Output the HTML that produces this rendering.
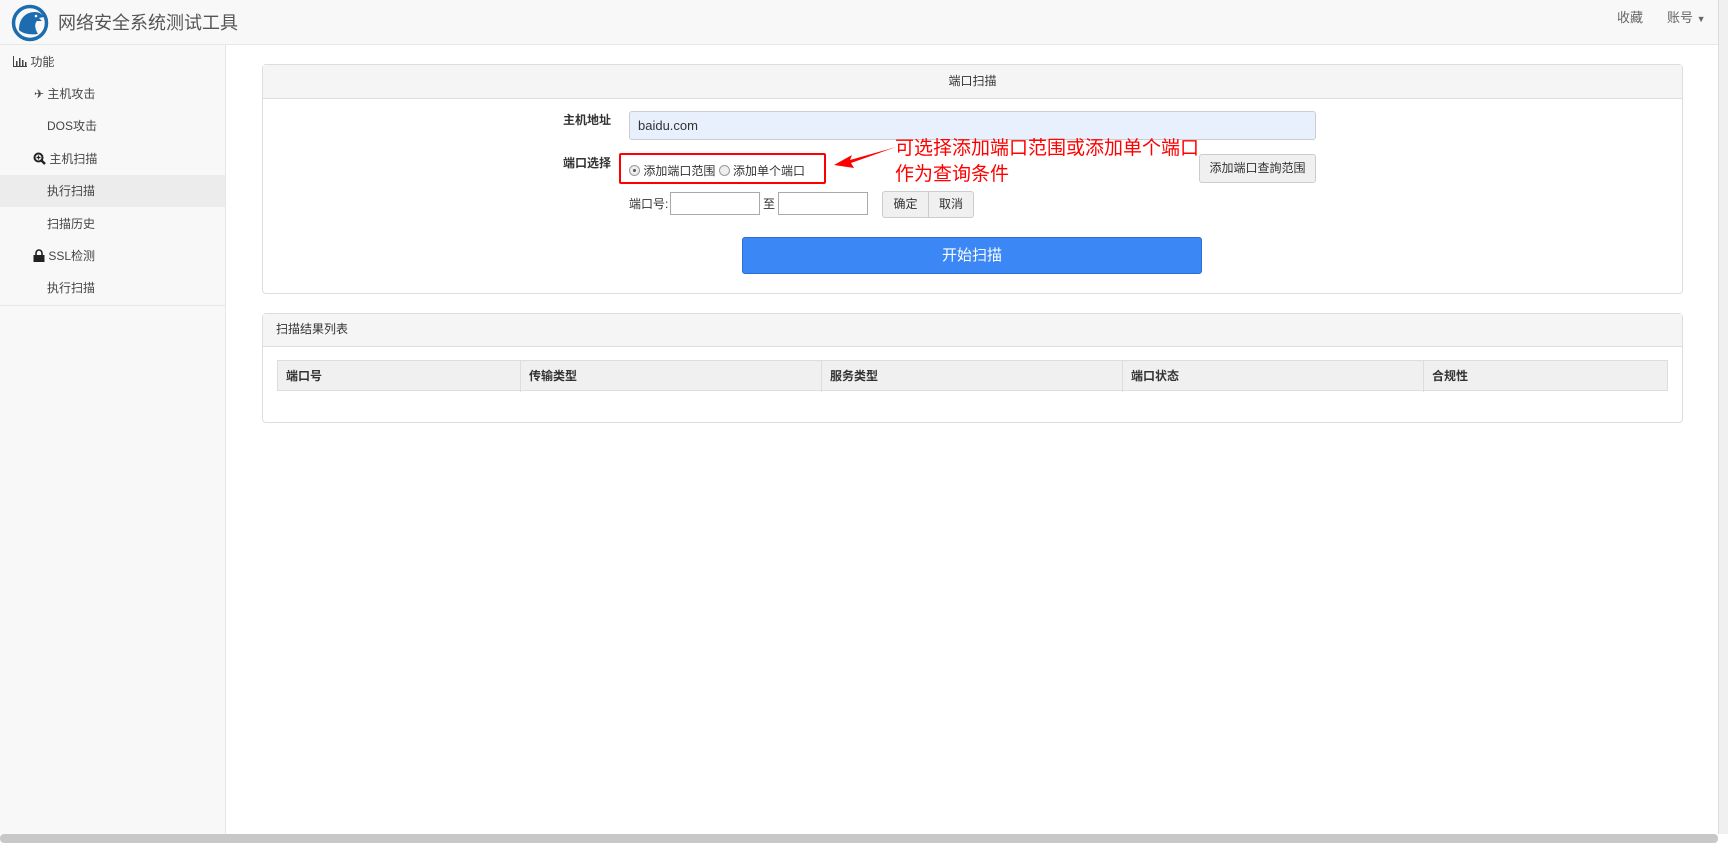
<!DOCTYPE html>
<html><head><meta charset="utf-8"><style>
*{box-sizing:border-box;margin:0;padding:0}
body{width:1728px;height:843px;overflow:hidden;background:#fff;font-family:"Liberation Sans","Noto Sans CJK SC",sans-serif;font-size:13px;color:#333;position:relative}
.abs{position:absolute}
.hdr{left:0;top:0;width:1718px;height:45px;background:#f8f8f8;border-bottom:1px solid #e7e7e7}
.side{left:0;top:45px;width:226px;height:789px;background:#f8f8f8;border-right:1px solid #e7e7e7}
.side .bot{position:absolute;left:0;top:260px;width:225px;border-top:1px solid #e7e7e7}
.it{position:absolute;left:0;width:225px;height:32px;line-height:32px;color:#444;font-size:12px}
.panel{border:1px solid #ddd;border-radius:4px;background:#fff}
.ph{background:#f5f5f5;border-bottom:1px solid #ddd}
.btn{border:1px solid #ccc;background:#f0f0f0;border-radius:3px;text-align:center;color:#333}
input{border:1px solid #aaa;height:23px}
.th{position:absolute;top:0;height:31px;line-height:31px;padding-left:8px;font-weight:bold;border-right:1px solid #ddd}
.rad{display:inline-block;width:11px;height:11px;border-radius:50%;border:1px solid #999;background:#eee;vertical-align:-1px;position:relative}
</style></head><body>
<div class="abs hdr">
 <svg class="abs" style="left:11px;top:4px" width="38" height="38" viewBox="0 0 38 38"><circle cx="19" cy="19" r="16.5" fill="none" stroke="#1e6cb0" stroke-width="3.5"/><path d="M8 26 C8 14 15 8 24 8 C28 8 31 10 33 13 L28 14 L31 17 L26 17 C24 19 23 23 27 30 C20 31 12 30 8 26Z" fill="#1e6cb0"/><circle cx="25" cy="12" r="1.3" fill="#fff"/></svg>
 <div class="abs" style="left:58px;top:9px;font-size:18px;color:#555">网络安全系统测试工具</div>
 <div class="abs" style="left:1617px;top:7px;color:#666">收藏</div>
 <div class="abs" style="left:1667px;top:7px;color:#666">账号 <span style="font-size:9px">▼</span></div>
</div>
<div class="abs side">
 <div class="it" style="top:1px;left:13px"><svg width="14" height="11" style="vertical-align:-1px"><path d="M0.5 0V10.5H14" stroke="#444" fill="none"/><rect x="3" y="5" width="1.5" height="5" fill="#444"/><rect x="6" y="2" width="1.5" height="8" fill="#444"/><rect x="9" y="4" width="1.5" height="6" fill="#444"/><rect x="12" y="6" width="1.5" height="4" fill="#444"/></svg> 功能</div>
 <div class="it" style="top:33px;padding-left:34px">✈ 主机攻击</div>
 <div class="it" style="top:65px;padding-left:47px">DOS攻击</div>
 <div class="it" style="top:98px;padding-left:33px"><svg width="13" height="13" style="vertical-align:-2px"><circle cx="5.5" cy="5.5" r="4" stroke="#222" stroke-width="2" fill="none"/><path d="M8.5 8.5L12 12" stroke="#222" stroke-width="2.5"/><path d="M5.5 3.5V7.5M3.5 5.5H7.5" stroke="#222" stroke-width="1.2"/></svg> 主机扫描</div>
 <div class="it" style="top:130px;padding-left:47px;background:#ececec">执行扫描</div>
 <div class="it" style="top:163px;padding-left:47px">扫描历史</div>
 <div class="it" style="top:195px;padding-left:33px"><svg width="12" height="13" style="vertical-align:-2px"><path d="M3 6V4a3 3 0 0 1 6 0v2" stroke="#222" stroke-width="1.6" fill="none"/><rect x="0.5" y="6" width="11" height="7" fill="#222"/></svg> SSL检测</div>
 <div class="it" style="top:227px;padding-left:47px">执行扫描</div>
 <div class="bot"></div>
</div>
<div class="abs" style="left:1718px;top:0;width:10px;height:834px;background:#f0f0f0;border-left:1px solid #ddd"></div>
<div class="abs" style="left:0;top:834px;width:1718px;height:9px;background:#c8c8c8;border-radius:4px"></div>

<div class="abs panel" style="left:262px;top:64px;width:1421px;height:230px">
 <div class="ph" style="height:34px;line-height:33px;text-align:center;font-size:12px">端口扫描</div>
</div>
<div class="abs" style="left:563px;top:111px;font-weight:bold;font-size:12px">主机地址</div>
<div class="abs" style="left:629px;top:111px;width:687px;height:29px;background:#e8f0fe;border:1px solid #ccc;border-radius:3px;padding-left:8px;line-height:27px">baidu.com</div>
<div class="abs" style="left:563px;top:154px;font-weight:bold;font-size:12px">端口选择</div>
<div class="abs" style="left:619px;top:153px;width:207px;height:31px;border:2px solid #f00;border-radius:2px"></div>
<div class="abs" style="left:629px;top:162px;font-size:12px"><span class="rad"><span style="position:absolute;left:3px;top:3px;width:3px;height:3px;border-radius:50%;background:#555"></span></span> 添加端口范围 <span class="rad"></span> 添加单个端口</div>
<svg class="abs" style="left:830px;top:143px" width="70" height="30"><path d="M4 22 L22 12 L20 17 L66 4 L21 20 L24 25Z" fill="#f00"/></svg>
<div class="abs" style="left:895px;top:136px;color:#f00;font-size:19px;line-height:26px">可选择添加端口范围或添加单个端口<br>作为查询条件</div>
<div class="abs btn" style="left:1199px;top:154px;width:117px;height:29px;line-height:27px;font-size:12px">添加端口查詢范围</div>
<div class="abs" style="left:629px;top:195px;font-size:12px">端口号:</div>
<input class="abs" style="left:670px;top:192px;width:90px">
<div class="abs" style="left:763px;top:195px;font-size:12px">至</div>
<input class="abs" style="left:778px;top:192px;width:90px">
<div class="abs btn" style="left:882px;top:191px;width:92px;height:27px;line-height:25px;font-size:12px"><span style="display:inline-block;width:46px;border-right:1px solid #ccc">确定</span><span style="display:inline-block;width:44px">取消</span></div>
<div class="abs" style="left:742px;top:237px;width:460px;height:37px;background:#3a87f5;border:1px solid #2a6fd4;border-radius:3px;color:#fff;text-align:center;line-height:35px;font-size:15px">开始扫描</div>

<div class="abs panel" style="left:262px;top:313px;width:1421px;height:110px">
 <div class="ph" style="height:33px;line-height:31px;padding-left:13px;font-size:12px">扫描结果列表</div>
</div>
<div class="abs" style="left:277px;top:360px;width:1391px;height:31px;background:#f0f0f0;border:1px solid #ddd;font-size:12px">
 <div class="th" style="left:0;width:243px">端口号</div>
 <div class="th" style="left:243px;width:301px">传输类型</div>
 <div class="th" style="left:544px;width:301px">服务类型</div>
 <div class="th" style="left:845px;width:301px">端口状态</div>
 <div class="th" style="left:1146px;width:243px;border:none">合规性</div>
</div>
</body></html>
